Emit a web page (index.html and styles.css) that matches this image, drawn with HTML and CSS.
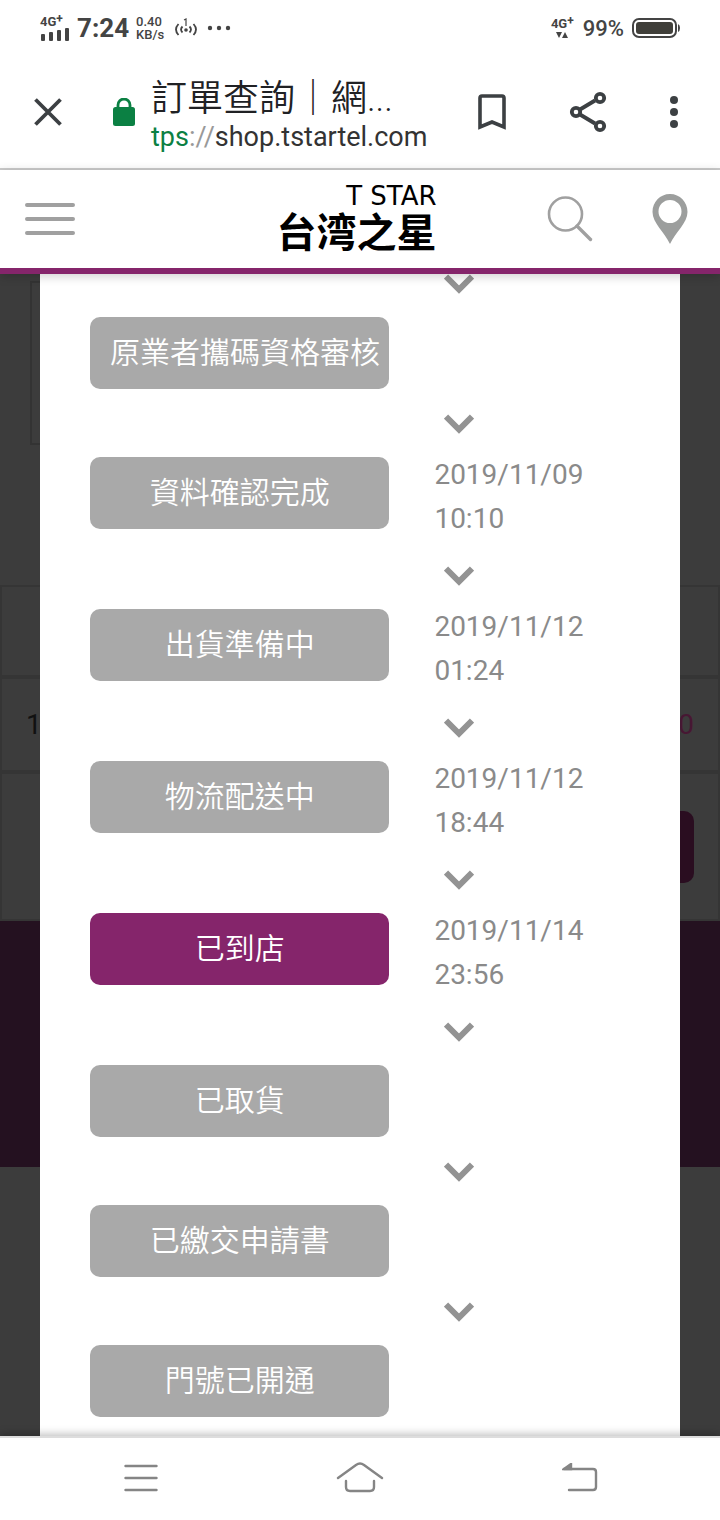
FILE: index.html
```html
<!DOCTYPE html>
<html lang="zh-Hant">
<head>
<meta charset="utf-8">
<meta name="viewport" content="width=device-width, initial-scale=1">
<title>訂單查詢｜網路門市</title>
<link rel="stylesheet" href="styles.css">
</head>
<body>
<div class="status-bar">
  <div class="signal">
    <span class="net">4G<sup>+</sup></span>
    <svg width="30" height="13" viewBox="0 0 30 13"><g fill="#444"><rect x="1" y="6" width="4" height="7" rx="1"/><rect x="9" y="4" width="4" height="9" rx="1"/><rect x="17" y="2" width="4" height="11" rx="1"/><rect x="25" y="0" width="4" height="13" rx="1"/></g></svg>
  </div>
  <span class="clock">7:24</span>
  <span class="speed">0.40<br>KB/s</span>
  <svg class="hotspot" width="24" height="20" viewBox="0 0 24 20" fill="none" stroke="#444" stroke-width="1.8"><path d="M4.500 6q-5 5.500 0 11M8.500 8.500q-3 3 0 6M19.500 6q5 5.500 0 11M15.500 8.500q3 3 0 6"/><circle cx="12" cy="12" r="1.800" fill="#444" stroke="none"/><path d="M10 2l2-1v7" stroke-width="1.200"/></svg>
  <svg class="more" width="24" height="6" viewBox="0 0 24 6" fill="#444"><circle cx="3" cy="3" r="2.200"/><circle cx="12" cy="3" r="2.200"/><circle cx="21" cy="3" r="2.200"/></svg>
  <div class="data">
    <span class="net">4G<sup>+</sup></span>
    <svg width="12" height="6" viewBox="0 0 12 6" fill="#444"><path d="M0 0h6L3 6zM6 6h6L9 0z"/></svg>
  </div>
  <span class="percent">99%</span>
  <svg width="48" height="20" viewBox="0 0 48 20"><rect x="1" y="1" width="43" height="18" rx="6" fill="none" stroke="#444" stroke-width="2"/><rect x="4" y="4" width="37" height="12" rx="3" fill="#403f3a"/><path d="M46 6q2 1 2 4t-2 4z" fill="#444"/></svg>
</div>

<div class="browser-bar">
  <button class="icon-btn" aria-label="關閉"><svg width="28" height="28" viewBox="0 0 28 28" stroke="#3c4043" stroke-width="3.800"><path d="M1.500 1.500l25 25M26.500 1.500l-25 25"/></svg></button>
  <svg class="lock" width="22" height="28" viewBox="0 0 22 28"><path d="M5 11V7a6 6 0 0 1 12 0v4" fill="none" stroke="#0b8043" stroke-width="2.800"/><rect y="9" width="22" height="19" rx="2.500" fill="#0b8043"/></svg>
  <div class="address">
    <div class="page-title">訂單查詢｜網...</div>
    <div class="url"><span class="scheme">tps</span><span class="slashes">://</span>shop.tstartel.com</div>
  </div>
  <div class="actions">
    <button class="icon-btn" aria-label="書籤"><svg width="28" height="36" viewBox="0 0 28 36" fill="none" stroke="#3c4043" stroke-width="3.600"><path d="M2 33V4q0-2 2-2h20q2 0 2 2v29l-12-5z"/></svg></button>
    <button class="icon-btn" aria-label="分享"><svg width="38" height="42" viewBox="0 0 38 42" fill="none" stroke="#3c4043" stroke-width="3.800"><path d="M11 18.500L26 9.500M11 23.500L26 32.500"/><circle cx="7" cy="21" r="4.200"/><circle cx="31" cy="7" r="4.200"/><circle cx="31" cy="35" r="4.200"/></svg></button>
    <button class="icon-btn" aria-label="更多"><svg width="8" height="32" viewBox="0 0 8 32" fill="#3c4043"><circle cx="4" cy="4" r="4"/><circle cx="4" cy="16" r="4"/><circle cx="4" cy="28" r="4"/></svg></button>
  </div>
</div>

<header class="site-header">
  <button class="icon-btn" aria-label="選單"><svg width="50" height="34" viewBox="0 0 50 34" stroke="#a0a0a0" stroke-width="4" stroke-linecap="round"><path d="M2 3h46M2 17h46M2 31h46"/></svg></button>
  <a class="logo" href="#"><span class="logo-en">T STAR</span><span class="logo-zh">台湾之星</span></a>
  <div class="tools">
    <button class="icon-btn" aria-label="搜尋"><svg width="46" height="46" viewBox="0 0 46 46" fill="none" stroke="#a0a0a0" stroke-linecap="round"><circle cx="18.500" cy="18" r="16.500" stroke-width="2.600"/><path d="M30 30l13.500 13.500" stroke-width="3.400"/></svg></button>
    <button class="icon-btn" aria-label="門市據點"><svg width="36" height="50" viewBox="0 0 36 50"><path fill="#9c9e9d" fill-rule="evenodd" d="M18 0C8 0 .500 8 .500 18c0 11 12 20 17.500 32 5.500-12 17.500-21 17.500-32C35.500 8 28 0 18 0zm0 6a11.500 11.500 0 1 1 0 23 11.500 11.500 0 0 1 0-23z"/></svg></button>
  </div>
</header>

<main class="stage">
  <div class="backdrop" aria-hidden="true">
    <div class="panel"></div>
    <div class="order">
      <div class="order-row"></div>
      <div class="order-row"><span>1</span><span class="price">0</span></div>
      <div class="order-row order-foot"><span class="pay"></span></div>
    </div>
    <div class="footer-band"></div>
  </div>
  <section class="modal" aria-label="訂單進度">
    <ol class="steps">
      <li class="step"><svg class="chevron" viewBox="0 0 30 20"><path d="M2 2.500l13 13 13-13"/></svg><span class="label">原業者攜碼資格審核</span></li>
      <li class="step"><svg class="chevron" viewBox="0 0 30 20"><path d="M2 2.500l13 13 13-13"/></svg><span class="label">資料確認完成</span><time class="date">2019/11/09<br>10:10</time></li>
      <li class="step"><svg class="chevron" viewBox="0 0 30 20"><path d="M2 2.500l13 13 13-13"/></svg><span class="label">出貨準備中</span><time class="date">2019/11/12<br>01:24</time></li>
      <li class="step"><svg class="chevron" viewBox="0 0 30 20"><path d="M2 2.500l13 13 13-13"/></svg><span class="label">物流配送中</span><time class="date">2019/11/12<br>18:44</time></li>
      <li class="step"><svg class="chevron" viewBox="0 0 30 20"><path d="M2 2.500l13 13 13-13"/></svg><span class="label current">已到店</span><time class="date">2019/11/14<br>23:56</time></li>
      <li class="step"><svg class="chevron" viewBox="0 0 30 20"><path d="M2 2.500l13 13 13-13"/></svg><span class="label">已取貨</span></li>
      <li class="step"><svg class="chevron" viewBox="0 0 30 20"><path d="M2 2.500l13 13 13-13"/></svg><span class="label">已繳交申請書</span></li>
      <li class="step"><svg class="chevron" viewBox="0 0 30 20"><path d="M2 2.500l13 13 13-13"/></svg><span class="label">門號已開通</span></li>
    </ol>
  </section>
</main>

<nav class="system-nav">
  <button class="icon-btn" aria-label="最近"><svg width="34" height="28" viewBox="0 0 34 28" stroke="#858585" stroke-width="2.400" stroke-linecap="round"><path d="M1.500 2h31M1.500 14h31M1.500 26h31"/></svg></button>
  <button class="icon-btn" aria-label="主畫面"><svg width="48" height="32" viewBox="0 0 48 32" fill="none" stroke="#858585" stroke-width="2.400" stroke-linecap="round"><path d="M2 16L20 3q4-3 8 0l18 13M10 19v6q0 4 4 4h20q4 0 4-4v-6"/></svg></button>
  <button class="icon-btn" aria-label="返回"><svg width="36" height="30" viewBox="0 0 36 30" fill="none" stroke="#858585" stroke-width="2.400" stroke-linecap="round"><path d="M2 6h29q3 0 3 3v15q0 3-3 3H7"/><path d="M2 6l7-5v5z" fill="#858585"/></svg></button>
</nav>
</body>
</html>
```
FILE: styles.css
```css
* { box-sizing: border-box; }

body {
  margin: 0;
  min-height: 100vh;
  display: flex;
  flex-direction: column;
  background: #fff;
  color: #444;
  font-family: Roboto, "Noto Sans CJK TC", sans-serif;
}

svg { display: block; flex: none; }

.icon-btn {
  display: block;
  padding: 0;
  border: 0;
  background: none;
}

/* Phone status bar */
.status-bar {
  display: flex;
  align-items: center;
  height: 56px;
  padding: 0 40px;
  font-weight: 500;
}
.signal { width: 30px; }
.net {
  display: block;
  font-size: 13px;
  font-weight: 700;
  line-height: 12px;
  white-space: nowrap;
}
.net sup { font-size: 12px; line-height: 0; vertical-align: 3px; }
.clock { margin-left: 7px; font-size: 26px; font-weight: 700; }
.speed { margin-left: 7px; font-size: 13px; line-height: 13px; }
.hotspot { margin-left: 10px; }
.more { margin-left: 9px; }
.data {
  display: grid;
  justify-items: center;
  gap: 2px;
  margin-left: auto;
}
.percent { margin: 0 8px 0 9px; font-size: 22px; }

/* Browser toolbar */
.browser-bar {
  display: flex;
  align-items: center;
  height: 114px;
  padding: 0 42px 0 34px;
  border-bottom: 2px solid #ccc;
}
.lock { margin-left: 51px; }
.address {
  flex: 1;
  min-width: 0;
  margin-left: 16px;
  padding-top: 9px;
  white-space: nowrap;
}
.page-title {
  color: #202124;
  font-size: 36px;
  font-weight: 350;
  line-height: 40px;
}
.url { color: #333; font-size: 27px; line-height: 36px; }
.scheme { color: #0b8043; }
.slashes { color: #999; }
.actions { display: flex; align-items: center; gap: 63px; }

/* Site header */
.site-header {
  display: grid;
  grid-template-columns: 1fr auto 1fr;
  align-items: center;
  height: 104px;
  padding: 0 32px 0 25px;
  border-bottom: 6px solid #85256b;
  box-shadow: 0 2px 10px rgba(0, 0, 0, .2);
  position: relative;
  z-index: 1;
  background: #fff;
}
.logo {
  display: grid;
  padding-top: 2px;
  color: #000;
  text-decoration: none;
}
.logo-en {
  justify-self: end;
  font-family: "DejaVu Sans", sans-serif;
  font-size: 26px;
  line-height: 28px;
}
.logo-zh {
  font-family: Roboto, "Noto Sans CJK JP", sans-serif;
  font-size: 40px;
  font-weight: 700;
  line-height: 48px;
}
.tools { display: flex; align-items: center; gap: 59px; justify-self: end; }

/* Dimmed page and the progress dialog over it */
.stage {
  flex: 1;
  display: grid;
  grid-template-columns: minmax(0, 1fr);
  overflow: hidden;
}
.backdrop, .modal { grid-area: 1 / 1; }
.backdrop { background: #3c3c3c; color: #111; font-size: 28px; }
.panel {
  height: 164px;
  margin: 7px 30px 140px;
  border: 2px solid #333;
  border-right: 0;
  margin-right: 60px;
}
.order { border: 2px solid #353535; }
.order-row {
  display: flex;
  align-items: center;
  justify-content: space-between;
  height: 95px;
  padding: 0 24px;
  border-bottom: 4px solid #353535;
}
.order-row:first-child { height: 92px; }
.order-foot { height: 145px; border-bottom: 0; }
.price { color: #471733; }
.pay {
  width: 120px;
  height: 72px;
  margin-left: auto;
  border-radius: 10px;
  background: #2a0d20;
}
.footer-band { height: 246px; background: #241120; }

.modal {
  margin: 0 40px;
  padding: 0 46px 0 50px;
  background: #fff;
}
.steps { margin: -25px 0 0; padding: 0; list-style: none; }
.step {
  display: grid;
  grid-template-columns: minmax(0, 3fr) minmax(0, 2fr);
  column-gap: 45px;
  align-items: start;
}
.chevron {
  grid-column: 2;
  width: 30px;
  height: 20px;
  margin: 25px 10px 23px;
  fill: none;
  stroke: #939393;
  stroke-width: 6;
}
.label {
  grid-column: 1;
  height: 72px;
  padding: 0 20px;
  border-radius: 10px;
  background: #a9a9a9;
  color: #fff;
  font-size: 30px;
  font-weight: 350;
  line-height: 72px;
  text-align: center;
  white-space: nowrap;
}
.label.current { background: #85256b; }
.date {
  margin-top: -4px;
  color: #8a8a8a;
  font-size: 28px;
  line-height: 44px;
}

/* System navigation */
.system-nav {
  display: flex;
  align-items: center;
  justify-content: space-between;
  height: 84px;
  padding: 0 122px 2px 124px;
  border-top: 2px solid #ddd;
  box-shadow: 0 -2px 8px rgba(0, 0, 0, .25);
  background: #fff;
  position: relative;
}
```
